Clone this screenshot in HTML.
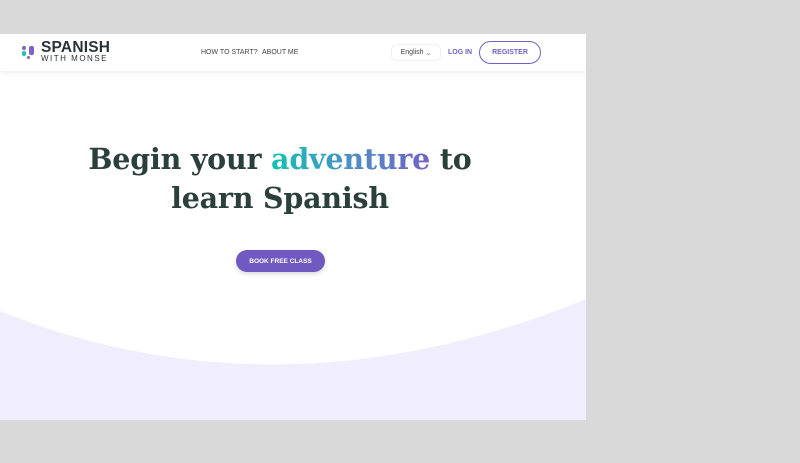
<!DOCTYPE html>
<html><head><meta charset="utf-8"><style>
*{margin:0;padding:0;box-sizing:border-box}
body{width:800px;height:463px;background:#d9d9d9;position:relative;overflow:hidden;font-family:"Liberation Sans",sans-serif}
#page{position:absolute;left:0;top:34px;width:586px;height:386px;background:#f0eefd;overflow:hidden}
#hdr{position:absolute;left:0;top:0;width:586px;height:37px;background:#fff;box-shadow:0 2px 5px rgba(0,0,0,.06);z-index:2}
.dot{position:absolute;border-radius:2px}
.abs{position:absolute;white-space:nowrap}
.btn{display:flex;align-items:center;justify-content:center}
h1{position:absolute;left:0;width:560px;text-align:center;font-family:"DejaVu Serif",serif;font-weight:bold;font-size:28.5px;line-height:39px;color:#2b3f3b;top:106px;letter-spacing:-0.2px}
.grad{background:linear-gradient(90deg,#13c2b3,#4d8fc4,#7361c6);-webkit-background-clip:text;background-clip:text;color:transparent}
</style></head><body>
<div id="page">
<svg style="position:absolute;left:0;top:0" width="586" height="386"><path d="M0 0 H586 V265 C380 350 180 350 0 277 Z" fill="#fff"/></svg>
<div id="hdr">
 <div class="dot" style="left:22px;top:12px;width:4px;height:4px;background:#7d63c9"></div>
 <div class="dot" style="left:22px;top:17px;width:4px;height:5px;background:#19c2b2"></div>
 <div class="dot" style="left:29px;top:12px;width:5px;height:9px;background:#7d63c9"></div>
 <div class="dot" style="left:27px;top:22px;width:3px;height:3px;background:#7d63c9"></div>
 <div class="abs" style="left:41px;top:5px;font-weight:bold;font-size:15.5px;color:#2b3235;letter-spacing:0.2px">SPANISH</div>
 <div class="abs" style="left:41px;top:20px;font-size:8px;color:#2b3235;letter-spacing:1.5px">WITH MONSE</div>
 <div class="abs" style="left:201px;top:15px;font-size:7px;color:#444">HOW TO START?</div>
 <div class="abs" style="left:262px;top:15px;font-size:7px;color:#444">ABOUT ME</div>
 <div class="abs btn" style="left:391px;top:10px;width:50px;height:17px;border:1px solid #f0f0f0;border-radius:6px;font-size:7px;color:#444">English&nbsp;<span style="color:#7361c6;font-size:7px">&#8964;</span></div>
 <div class="abs" style="left:448px;top:15px;font-size:7px;font-weight:bold;color:#7361c6">LOG IN</div>
 <div class="abs btn" style="left:479px;top:7px;width:62px;height:23px;border:1.5px solid #7361c6;border-radius:12px;font-size:7px;font-weight:bold;color:#7361c6">REGISTER</div>
</div>
<h1>Begin your <span class="grad">adventure</span> to<br>learn Spanish</h1>
<div class="abs btn" style="left:236px;top:216px;width:89px;height:22px;background:#7159c2;border-radius:11px;color:#fff;font-size:6.5px;font-weight:bold;box-shadow:0 2px 4px rgba(0,0,0,.15)">BOOK FREE CLASS</div>
</div>
</body></html>
